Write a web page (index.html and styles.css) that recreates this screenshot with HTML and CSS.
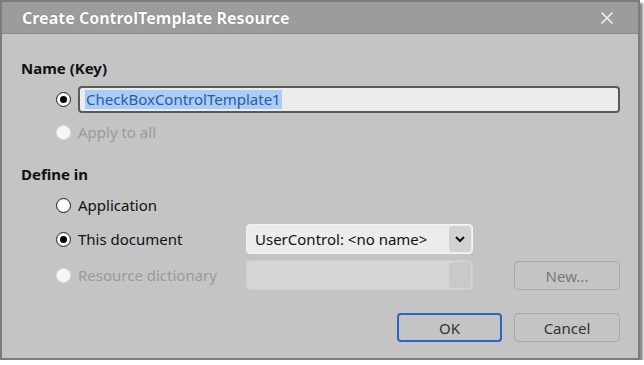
FILE: index.html
```html
<!DOCTYPE html>
<html>
<head>
    <title>Create ControlTemplate Resource</title>
    <link rel="stylesheet" href="styles.css">
</head>
<body>
    <div class="window">
        <div class="titlebar">
            <span class="title">Create ControlTemplate Resource</span>
            <svg class="close" width="14" height="14" viewBox="0 0 14 14">
                <path d="M1.5 1.5 L12.5 12.5 M12.5 1.5 L1.5 12.5" stroke="#f2f2f2" stroke-width="1.6" fill="none"/>
            </svg>
        </div>
        <div class="content">
            <div class="heading">Name (Key)</div>
            <div class="row name-row">
                <span class="radio checked"></span>
                <div class="textbox"><span class="selected">CheckBoxControlTemplate1</span></div>
            </div>
            <div class="row apply-row disabled">
                <span class="radio"></span>
                <span>Apply to all</span>
            </div>

            <div class="heading define">Define in</div>
            <div class="options">
                <div class="row">
                    <span class="radio"></span>
                    <span>Application</span>
                </div>
                <div></div>
                <div></div>

                <div class="row">
                    <span class="radio checked"></span>
                    <span>This document</span>
                </div>
                <div class="combo">
                    <span class="combo-text">UserControl: &lt;no name&gt;</span>
                    <span class="combo-btn">
                        <svg width="10" height="7" viewBox="0 0 10 7">
                            <path d="M1 1 L5 5 L9 1" stroke="#111" stroke-width="2" fill="none"/>
                        </svg>
                    </span>
                </div>
                <div></div>

                <div class="row disabled">
                    <span class="radio"></span>
                    <span>Resource dictionary</span>
                </div>
                <div class="combo combo-disabled">
                    <span class="combo-text"></span>
                    <span class="combo-btn"></span>
                </div>
                <button class="btn btn-disabled">New...</button>
            </div>

            <div class="actions">
                <button class="btn btn-default">OK</button>
                <button class="btn">Cancel</button>
            </div>
        </div>
    </div>
</body>
</html>
```

FILE: styles.css
```css
body {
    margin: 0;
    background-color: #ffffff;
    font-family: "Noto Sans", "Open Sans", sans-serif;
    font-size: 15px;
    color: #111;
}
.window {
    width: 636px;
    height: 356px;
    border: 2px solid #7c7c7c;
    background-color: #c4c4c4;
    box-shadow: 3px 3px 2px rgba(0, 0, 0, 0.45);
    display: flex;
    flex-direction: column;
}
.titlebar {
    height: 31px;
    background-color: #9c9c9c;
    border-bottom: 1px solid #878787;
    display: flex;
    align-items: center;
    justify-content: space-between;
    padding: 0 24px 0 20px;
}
.title {
    color: #ffffff;
    font-weight: bold;
    font-size: 16px;
    text-shadow: 0 0 1px rgba(60, 60, 60, 0.6);
}
.close {
    display: block;
}
.content {
    padding: 25px 18px 0 19px;
}
.heading {
    font-weight: bold;
    line-height: 18px;
}
.define {
    margin-top: 20px;
}
.row {
    display: flex;
    align-items: center;
    gap: 7px;
    padding-left: 35px;
}
.name-row {
    margin-top: 9px;
    height: 27px;
}
.apply-row {
    margin-top: 6px;
    height: 26px;
}
.disabled {
    color: #9a9a9a;
}
.radio {
    width: 13px;
    height: 13px;
    border: 1.5px solid #222;
    border-radius: 50%;
    background: radial-gradient(circle, #ffffff 40%, #e4e4e4 100%);
    flex-shrink: 0;
    position: relative;
}
.radio.checked::after {
    content: "";
    position: absolute;
    left: 3px;
    top: 3px;
    width: 7px;
    height: 7px;
    border-radius: 50%;
    background-color: #000;
}
.disabled .radio {
    border-color: #dcdcdc;
    background: #f6f6f6;
}
.textbox {
    flex: 1;
    height: 23px;
    border: 2px solid #5a5a5a;
    border-radius: 4px;
    background-color: #ececec;
    display: flex;
    align-items: center;
    padding-left: 5px;
}
.selected {
    background-color: #a9cdf5;
    color: #2d5aa3;
    padding: 0 1px;
    line-height: 19px;
}
.options {
    margin-top: 9px;
    display: grid;
    grid-template-columns: 225px 227px 1fr;
    grid-template-rows: 26px 30px 30px;
    row-gap: 6px;
}
.combo {
    border: 1px solid #f4f4f4;
    border-radius: 4px;
    background-color: #ececec;
    display: flex;
    align-items: center;
    padding: 1px;
}
.combo-text {
    flex: 1;
    padding-left: 7px;
}
.combo-btn {
    width: 22px;
    height: 26px;
    background-color: #d2d2d2;
    border-radius: 3px;
    display: flex;
    align-items: center;
    justify-content: center;
}
.combo-disabled {
    background-color: #d5d5d5;
    border-color: #cdcdcd;
}
.combo-disabled .combo-btn {
    background-color: #c9c9c9;
}
.btn {
    font-family: inherit;
    font-size: 15px;
    height: 29px;
    width: 106px;
    border: 1.5px solid #a8a8a8;
    border-radius: 4px;
    background-color: #c4c4c4;
    color: #333;
    padding: 0;
}
.btn-disabled {
    color: #7a7a7a;
    justify-self: end;
    align-self: end;
}
.btn-default {
    border: 2px solid #2d63c6;
    width: 105px;
}
.actions {
    margin-top: 23px;
    display: flex;
    justify-content: flex-end;
    gap: 12px;
}
```
